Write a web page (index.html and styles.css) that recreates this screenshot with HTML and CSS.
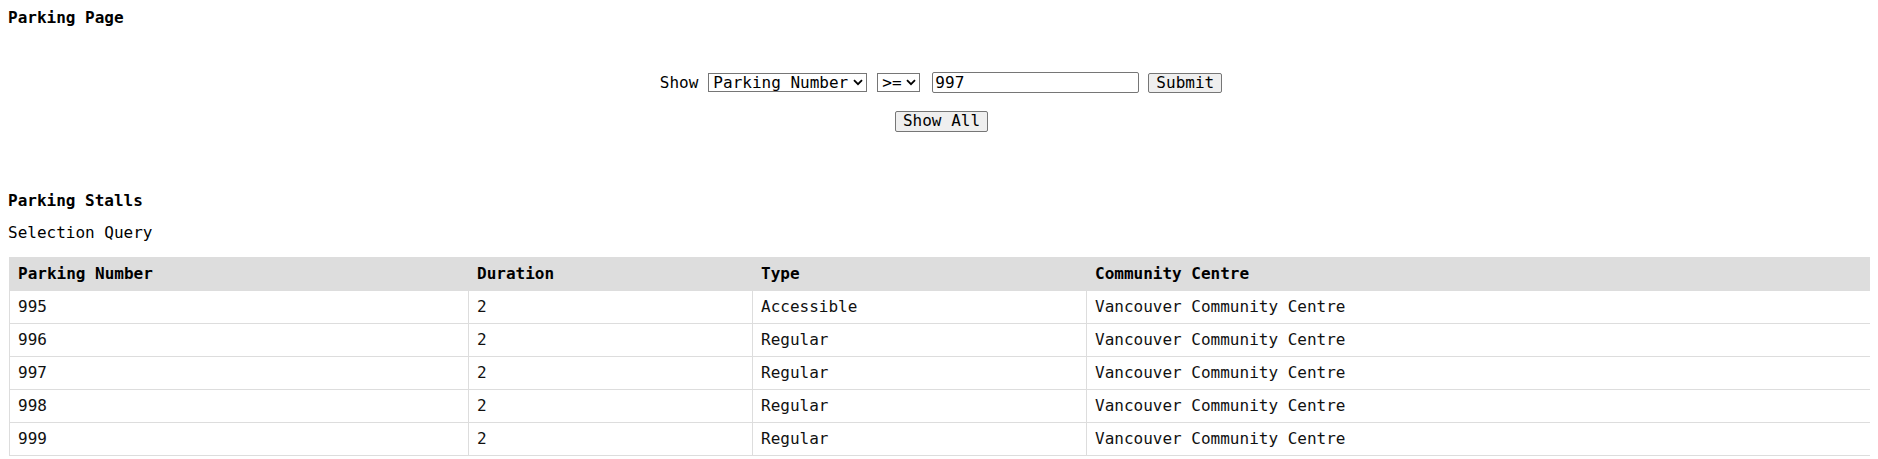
FILE: index.html
```html
<!DOCTYPE html>
<html lang="en">
<head>
<meta charset="utf-8">
<title>Parking Page</title>
<link rel="stylesheet" href="styles.css">
</head>
<body>
<h1 class="page-title">Parking Page</h1>
<form class="filter">
  <div class="filter-row">
    <label class="show-label" for="field">Show</label>
    <span class="sel-wrap sel-wrap-field">
      <select id="field" class="sel sel-field"><option>Parking Number</option><option>Duration</option><option>Type</option><option>Community Centre</option></select>
      <svg class="chev" width="10" height="7" viewBox="0 0 10 7" aria-hidden="true"><path d="M1 1.2 L5 5.2 L9 1.2" fill="none" stroke="#000" stroke-width="1.8"/></svg>
    </span>
    <span class="sel-wrap sel-wrap-op">
      <select class="sel sel-op"><option>&gt;=</option><option>&lt;=</option><option>=</option></select>
      <svg class="chev" width="10" height="7" viewBox="0 0 10 7" aria-hidden="true"><path d="M1 1.2 L5 5.2 L9 1.2" fill="none" stroke="#000" stroke-width="1.8"/></svg>
    </span>
    <input class="txt" type="text" value="997">
    <button type="button" class="btn btn-submit">Submit</button>
  </div>
  <div class="filter-row filter-row-all">
    <button type="button" class="btn btn-all">Show All</button>
  </div>
</form>
<h2 class="section-title">Parking Stalls</h2>
<p class="caption">Selection Query</p>
<table class="stalls">
  <colgroup>
    <col class="c1"><col class="c2"><col class="c3"><col class="c4">
  </colgroup>
  <thead>
    <tr><th>Parking Number</th><th>Duration</th><th>Type</th><th>Community Centre</th></tr>
  </thead>
  <tbody>
    <tr><td>995</td><td>2</td><td>Accessible</td><td>Vancouver Community Centre</td></tr>
    <tr><td>996</td><td>2</td><td>Regular</td><td>Vancouver Community Centre</td></tr>
    <tr><td>997</td><td>2</td><td>Regular</td><td>Vancouver Community Centre</td></tr>
    <tr><td>998</td><td>2</td><td>Regular</td><td>Vancouver Community Centre</td></tr>
    <tr><td>999</td><td>2</td><td>Regular</td><td>Vancouver Community Centre</td></tr>
  </tbody>
</table>
</body>
</html>
```
FILE: styles.css
```css
html, body {
  background: #fff;
}
body {
  margin: 8px;
  font-family: "DejaVu Sans Mono", "Liberation Mono", monospace;
  font-size: 16px;
  line-height: 20px;
  color: #000;
}
.page-title {
  margin: 0;
  font-size: 16px;
  line-height: 20px;
  font-weight: bold;
}
.filter {
  margin: 44px 0 0;
}
.filter-row {
  display: flex;
  justify-content: center;
  align-items: center;
  height: 21px;
  padding-left: 4px;
}
.filter-row-all {
  margin-top: 18px;
  padding-left: 5px;
}
.show-label {
  line-height: 21px;
  color: #000;
}
.sel-wrap {
  position: relative;
  display: inline-flex;
  margin-left: 10px;
}
.sel {
  -webkit-appearance: none;
  appearance: none;
  box-sizing: border-box;
  height: 19px;
  margin: 0;
  font-family: "DejaVu Sans Mono", "Liberation Mono", monospace;
  font-size: 16px;
  line-height: 17px;
  color: #000;
  background-color: #fff;
  border: 1px solid #767676;
  border-radius: 0;
  padding: 0 14px 0 4px;
}
.sel-field {
  width: 159px;
}
.sel-op {
  width: 43px;
}
.chev {
  position: absolute;
  right: 4px;
  top: 6px;
  pointer-events: none;
}
.txt {
  box-sizing: border-box;
  width: 207px;
  height: 21px;
  margin: 0 0 0 12px;
  padding: 1px 2px;
  font-family: "DejaVu Sans Mono", "Liberation Mono", monospace;
  font-size: 16px;
  color: #000;
  border: 1px solid #767676;
  border-radius: 2px;
  background: #fff;
}
.btn {
  box-sizing: border-box;
  margin: 0;
  font-family: "DejaVu Sans Mono", "Liberation Mono", monospace;
  font-size: 16px;
  line-height: 17px;
  color: #000;
  background: #efefef;
  border: 1px solid #767676;
  border-radius: 2px;
}
.btn-submit {
  height: 20px;
  padding: 0 7px 1px;
  margin-left: 9px;
}
.btn-all {
  height: 21px;
  padding: 0 7px 2px;
}
.section-title {
  margin: 59px 0 0;
  font-size: 16px;
  line-height: 20px;
  font-weight: bold;
}
.caption {
  margin: 12px 0 0;
  line-height: 20px;
}
.stalls {
  margin: 14px 0 0 1px;
  width: calc(100% + 2px);
  border-collapse: collapse;
  table-layout: fixed;
}
.c1 { width: 459px; }
.c2 { width: 284px; }
.c3 { width: 334px; }
.stalls th,
.stalls td {
  border: 1px solid #dddddd;
  padding: 6px 8px;
  line-height: 20px;
  text-align: left;
  white-space: nowrap;
}
.stalls th {
  background: #dddddd;
  font-weight: bold;
  color: #000;
}
.stalls td {
  color: #111;
}
```
